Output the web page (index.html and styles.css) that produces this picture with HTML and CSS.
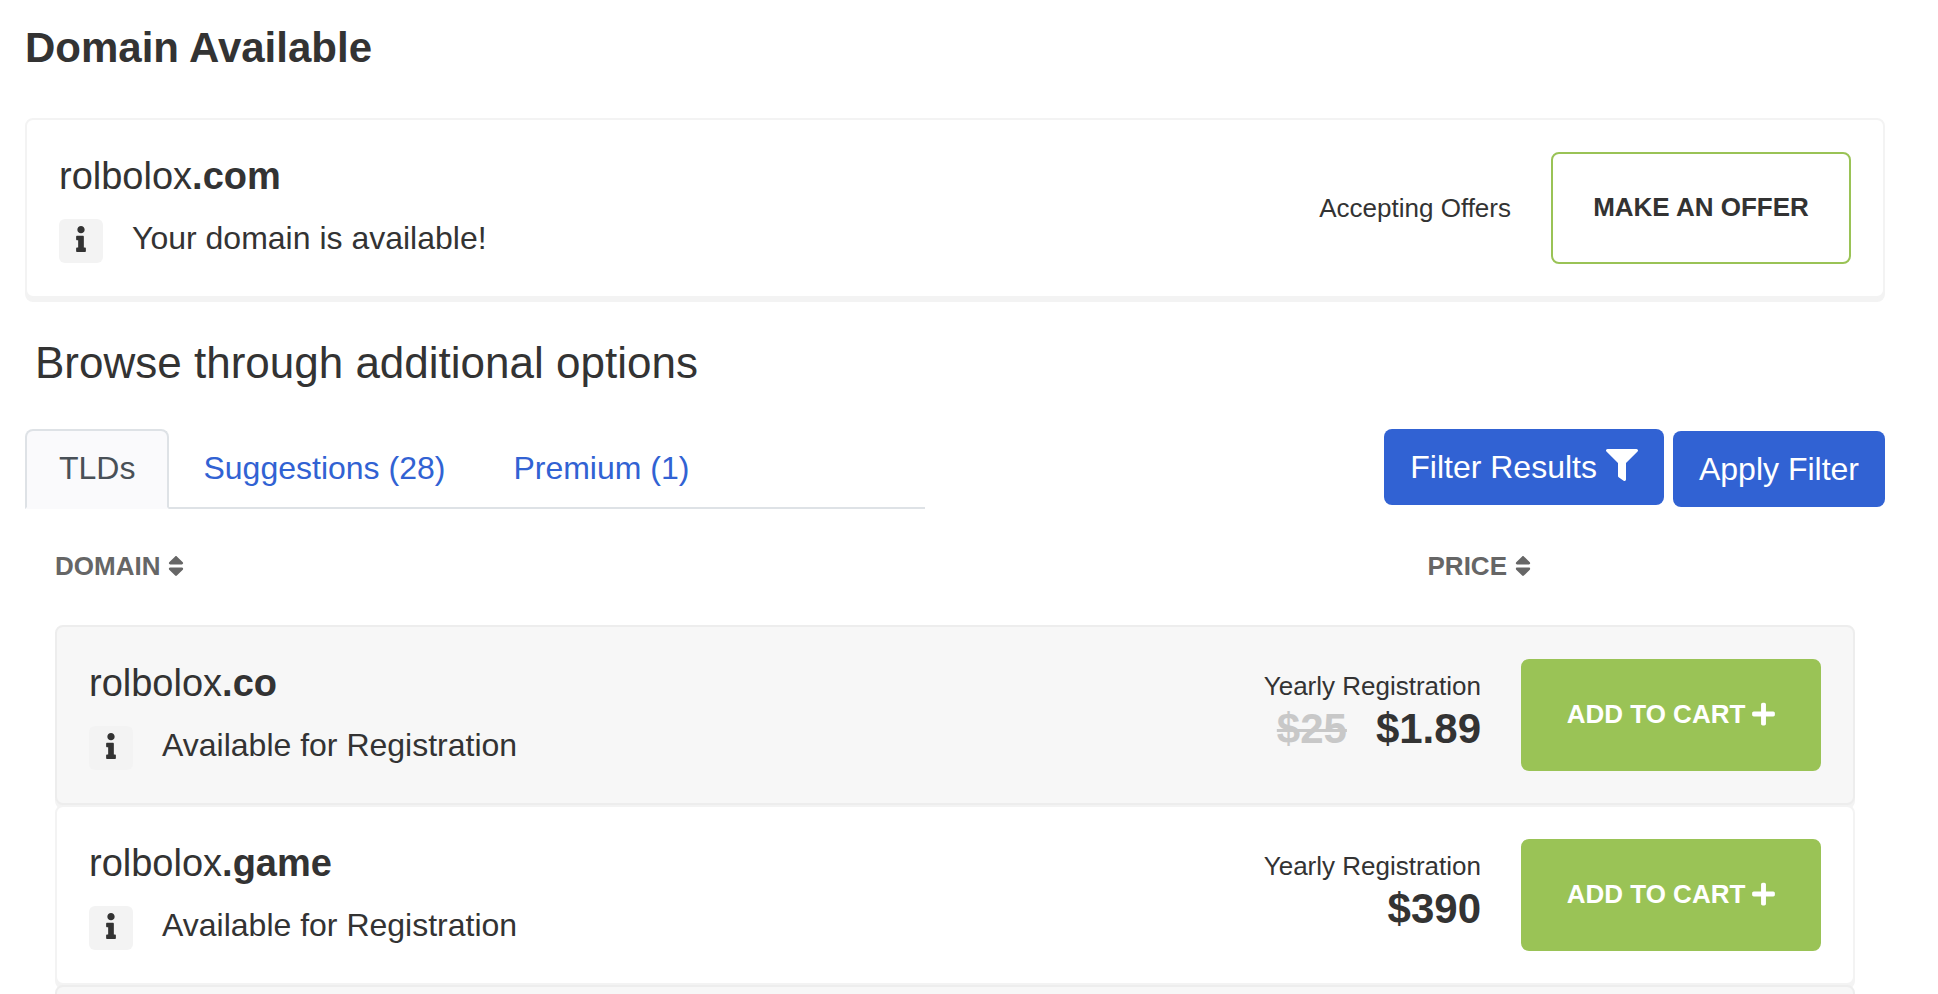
FILE: index.html
```html
<!DOCTYPE html>
<html lang="en">
<head>
<meta charset="utf-8">
<title>Domain Available</title>
<meta name="viewport" content="width=device-width, initial-scale=1">
<link rel="stylesheet" href="styles.css">
</head>
<body>
<svg class="sprite" aria-hidden="true">
  <symbol id="info" viewBox="0 0 192 512"><path d="M20 424.229h20V279.771H20c-11.046 0-20-8.954-20-20V212c0-11.046 8.954-20 20-20h112c11.046 0 20 8.954 20 20v212.229h20c11.046 0 20 8.954 20 20V492c0 11.046-8.954 20-20 20H20c-11.046 0-20-8.954-20-20v-47.771c0-11.046 8.954-20 20-20zM96 0C56.235 0 24 32.235 24 72s32.235 72 72 72 72-32.235 72-72S135.764 0 96 0z"/></symbol>
  <symbol id="sort" viewBox="0 0 320 512"><path d="M41 288h238c21.4 0 32.1 25.9 17 41L177 448c-9.4 9.4-24.6 9.4-33.9 0L24 329c-15.1-15.1-4.4-41 17-41zm255-105L177 64c-9.4-9.4-24.6-9.4-33.9 0L24 183c-15.1 15.1-4.4 41 17 41h238c21.4 0 32.1-25.9 17-41z"/></symbol>
  <symbol id="filter" viewBox="0 0 512 512"><path d="M487.976 0H24.028C2.71 0-8.047 25.866 7.058 40.971L192 225.941V432c0 7.831 3.821 15.17 10.237 19.662l80 55.98C298.02 518.69 320 507.493 320 487.98V225.941l184.947-184.97C520.021 25.896 509.338 0 487.976 0z"/></symbol>
  <symbol id="plus" viewBox="0 0 448 512"><path d="M416 208H272V64c0-17.67-14.33-32-32-32h-32c-17.67 0-32 14.33-32 32v144H32c-17.67 0-32 14.33-32 32v32c0 17.67 14.33 32 32 32h144v144c0 17.67 14.33 32 32 32h32c17.67 0 32-14.33 32-32V304h144c17.67 0 32-14.33 32-32v-32c0-17.67-14.33-32-32-32z"/></symbol>
</svg>
<main class="page">
  <h1 class="title">Domain Available</h1>

  <section class="card">
    <div class="details">
      <div class="name">rolbolox<b>.com</b></div>
      <div class="status">
        <span class="badge"><svg class="icon-info"><use href="#info"/></svg></span>
        <span>Your domain is available!</span>
      </div>
    </div>
    <p class="offers">Accepting Offers</p>
    <button class="action action-outline" type="button">MAKE AN OFFER</button>
  </section>

  <h2 class="subtitle">Browse through additional options</h2>

  <div class="toolbar">
    <nav class="tabs">
      <a class="tab tab-active" href="#tlds">TLDs</a>
      <a class="tab" href="#suggestions">Suggestions (28)</a>
      <a class="tab" href="#premium">Premium (1)</a>
    </nav>
    <div class="filters">
      <button class="filter" type="button">Filter Results<svg class="icon-filter"><use href="#filter"/></svg></button>
      <button class="filter filter-apply" type="button">Apply Filter</button>
    </div>
  </div>

  <div class="results" id="tlds">
    <div class="sorters">
      <button class="sorter" type="button">DOMAIN<svg class="icon-sort"><use href="#sort"/></svg></button>
      <button class="sorter" type="button">PRICE<svg class="icon-sort"><use href="#sort"/></svg></button>
    </div>

    <article class="card card-shaded">
      <div class="details">
        <div class="name">rolbolox<b>.co</b></div>
        <div class="status">
          <span class="badge"><svg class="icon-info"><use href="#info"/></svg></span>
          <span>Available for Registration</span>
        </div>
      </div>
      <div class="pricing">
        <div class="term">Yearly Registration</div>
        <div class="price"><s class="was">$25</s><strong>$1.89</strong></div>
      </div>
      <button class="action" type="button">ADD TO CART<svg class="icon-plus"><use href="#plus"/></svg></button>
    </article>

    <article class="card">
      <div class="details">
        <div class="name">rolbolox<b>.game</b></div>
        <div class="status">
          <span class="badge"><svg class="icon-info"><use href="#info"/></svg></span>
          <span>Available for Registration</span>
        </div>
      </div>
      <div class="pricing">
        <div class="term">Yearly Registration</div>
        <div class="price"><strong>$390</strong></div>
      </div>
      <button class="action" type="button">ADD TO CART<svg class="icon-plus"><use href="#plus"/></svg></button>
    </article>

    <article class="card card-shaded"></article>
  </div>
</main>
</body>
</html>
```

FILE: styles.css
```css
* {
  box-sizing: border-box;
}

body {
  margin: 0;
  background: #fff;
  color: #333;
  font-family: "Liberation Sans", Arial, sans-serif;
  font-size: 32px;
}

button {
  font-family: inherit;
  cursor: pointer;
}

svg {
  display: block;
  flex: none;
  fill: currentColor;
}

.sprite {
  display: none;
}

.page {
  height: 100vh;
  padding: 23px 53px 0 25px;
  overflow: hidden;
}

.title {
  margin: 0 0 45px;
  font-size: 42px;
  line-height: 50px;
}

.subtitle {
  margin: 39px 10px 40px;
  font-size: 44px;
  font-weight: 400;
  line-height: 52px;
}

/* Domain cards */
.card {
  display: flex;
  align-items: center;
  padding: 32px;
  border: 2px solid #f3f3f3;
  border-radius: 8px;
  background: #fff;
  box-shadow: 0 4px 0 #f3f3f3;
}

.card-shaded {
  border-color: #ededed;
  background: #f7f7f7;
}

.details {
  flex: 1;
  align-self: flex-start;
}

.name {
  margin-bottom: 19px;
  font-size: 38px;
  line-height: 48px;
}

.status {
  display: flex;
  gap: 29px;
  line-height: 38px;
}

.badge {
  display: flex;
  align-items: center;
  justify-content: center;
  width: 44px;
  height: 44px;
  padding-bottom: 4px;
  border-radius: 6px;
  background: #f3f3f3;
}

.icon-info {
  width: 10px;
  height: 26px;
}

.offers {
  margin: 0;
  font-size: 26px;
}

.pricing {
  align-self: flex-start;
  padding-top: 8px;
  text-align: right;
}

.term {
  font-size: 26px;
  line-height: 38px;
}

.price {
  display: flex;
  justify-content: flex-end;
  gap: 29px;
  font-size: 42px;
  font-weight: 700;
  line-height: 48px;
}

.was {
  color: #c8c8c8;
  text-decoration-thickness: 3px;
}

.action {
  display: flex;
  align-items: center;
  justify-content: center;
  gap: 7px;
  width: 300px;
  height: 112px;
  margin-left: 40px;
  padding: 0 0 2px;
  border: 2px solid #9ac356;
  border-radius: 8px;
  background: #9ac356;
  color: #fff;
  font-size: 26px;
  font-weight: 700;
}

.action-outline {
  background: #fff;
  color: #333;
}

.icon-plus {
  width: 23px;
  height: 26px;
}

/* Tabs and filters */
.toolbar {
  display: flex;
  align-items: flex-start;
  justify-content: space-between;
}

.tabs {
  display: flex;
  width: calc(50% - 30px);
  border-bottom: 2px solid #dee2e6;
}

.tab {
  margin-bottom: -2px;
  padding: 13px 32px 15px;
  border: 2px solid transparent;
  border-radius: 8px 8px 0 0;
  color: #3162d3;
  line-height: 48px;
  text-decoration: none;
}

.tab-active {
  border-color: #dee2e6;
  border-bottom-color: #fafafc;
  background: #fafafc;
  color: #495057;
}

.filters {
  display: flex;
  gap: 9px;
}

.filter {
  display: flex;
  align-items: center;
  gap: 9px;
  height: 76px;
  padding: 0 26px;
  border: 0;
  border-radius: 8px;
  background: #3162d3;
  color: #fff;
  font-size: 32px;
  line-height: 48px;
}

.filter-apply {
  margin-top: 2px;
}

.icon-filter {
  width: 32px;
  height: 32px;
  margin-bottom: 4px;
}

/* Results list */
.results {
  padding: 38px 30px 0;
}

.sorters {
  display: flex;
  justify-content: space-between;
  margin-bottom: 40px;
  padding-right: 324px;
}

.sorter {
  display: flex;
  align-items: center;
  gap: 8px;
  padding: 0;
  border: 0;
  background: none;
  color: #666;
  font-size: 26px;
  font-weight: 700;
  line-height: 38px;
}

.icon-sort {
  width: 16px;
  height: 26px;
}
```
